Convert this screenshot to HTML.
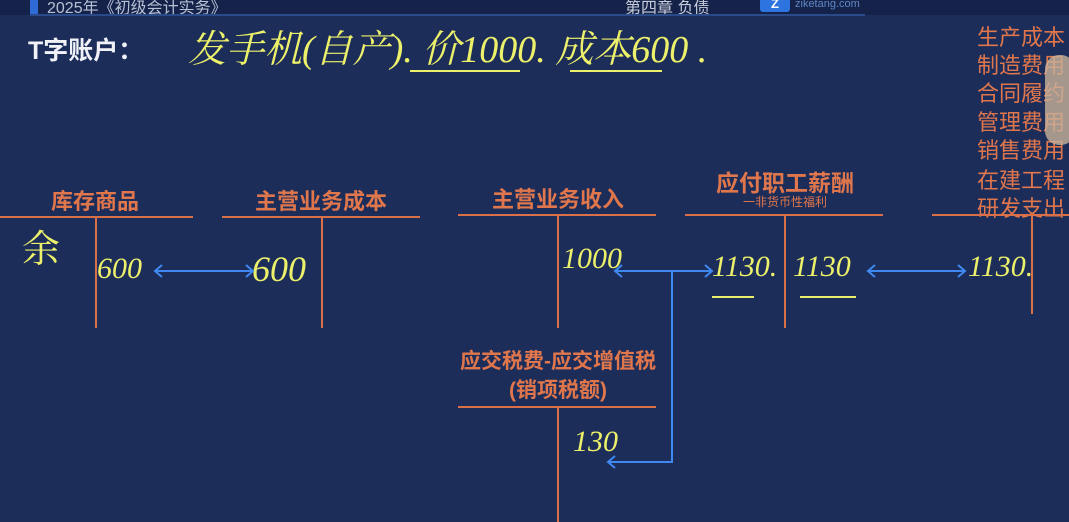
<!DOCTYPE html>
<html><head><meta charset="utf-8"><style>
*{margin:0;padding:0;box-sizing:border-box}
body{width:1069px;height:522px;overflow:hidden;background:#1c2d5a;position:relative;font-family:"Liberation Sans","Noto Sans CJK SC",sans-serif}
.a{position:absolute;white-space:nowrap}
.t{color:#e0764c;font-size:22px;font-weight:bold;transform:translateX(-50%)}
.h{position:absolute;background:#d9704a;height:2px}
.v{position:absolute;background:#d9704a;width:2px}
.y{color:#ecf06a;font-family:"Liberation Serif","Noto Serif CJK SC",serif;font-style:italic;font-size:30px}
.r{color:#e0764c;font-size:22px;left:977px}
</style></head><body>
<div class="a" style="left:0;top:0;width:1069px;height:15px;background:#15234a"></div>
<div class="a" style="left:30px;top:0;width:8px;height:14px;background:#2e6ad8"></div>
<div class="a" style="left:47px;top:-6px;color:#b8c0d4;font-size:16px">2025年《初级会计实务》</div>
<div class="a" style="left:625px;top:-6px;color:#c8ccd8;font-size:16px">第四章 负债</div>
<div class="a" style="left:760px;top:-4px;width:30px;height:16px;background:#2d74e0;border-radius:3px;color:#fff;font-size:13px;font-weight:bold;text-align:center">Z</div>
<div class="a" style="left:795px;top:-2px;color:#5f86c8;font-size:11px">ziketang.com</div>
<div class="a" style="left:30px;top:14px;width:835px;height:2px;background:#2a4a8a"></div>
<div class="a" style="left:28px;top:31px;color:#f0f2f8;font-size:25px;font-weight:bold">T字账户：</div>
<div class="a y" style="left:188px;top:18px;font-size:38px">发手机(自产). 价1000. 成本600 .</div>
<div class="a" style="left:410px;top:70px;width:110px;height:2px;background:#ecf06a"></div>
<div class="a" style="left:570px;top:70px;width:92px;height:2px;background:#ecf06a"></div>

<div class="a r" style="top:20px">生产成本</div>
<div class="a r" style="top:48px">制造费用</div>
<div class="a r" style="top:76px">合同履约</div>
<div class="a r" style="top:105px">管理费用</div>
<div class="a r" style="top:133px">销售费用</div>
<div class="a r" style="top:163px">在建工程</div>
<div class="a r" style="top:191px">研发支出</div>
<div class="a" style="left:1045px;top:55px;width:30px;height:90px;background:#c9b29a;border-radius:14px;opacity:.8"></div>

<div class="a t" style="left:95px;top:184px">库存商品</div>
<div class="h" style="left:0;top:216px;width:193px"></div><div class="v" style="left:95px;top:216px;height:112px"></div>
<div class="a t" style="left:321px;top:184px">主营业务成本</div>
<div class="h" style="left:222px;top:216px;width:198px"></div><div class="v" style="left:321px;top:216px;height:112px"></div>
<div class="a t" style="left:558px;top:182px">主营业务收入</div>
<div class="h" style="left:458px;top:214px;width:198px"></div><div class="v" style="left:557px;top:214px;height:114px"></div>
<div class="a t" style="left:785px;top:164px;font-size:23px">应付职工薪酬</div>
<div class="a t" style="left:785px;top:193px;font-size:12px;font-weight:normal">一非货币性福利</div>
<div class="h" style="left:685px;top:214px;width:198px"></div><div class="v" style="left:784px;top:214px;height:114px"></div>
<div class="h" style="left:932px;top:214px;width:137px"></div><div class="v" style="left:1031px;top:214px;height:100px"></div>
<div class="a t" style="left:558px;top:345px;font-size:21px">应交税费-应交增值税</div>
<div class="a t" style="left:558px;top:374px;font-size:21px">(销项税额)</div>
<div class="h" style="left:458px;top:406px;width:198px"></div><div class="v" style="left:557px;top:406px;height:116px"></div>

<div class="a y" style="left:22px;top:218px;font-size:38px;font-style:normal">余</div>
<div class="a y" style="left:97px;top:252px">600</div>
<div class="a y" style="left:252px;top:248px;font-size:36px">600</div>
<div class="a y" style="left:562px;top:242px">1000</div>
<div class="a y" style="left:712px;top:250px">1130.</div>
<div class="a y" style="left:793px;top:250px">1130</div>
<div class="a y" style="left:968px;top:250px">1130.</div>
<div class="a y" style="left:573px;top:425px">130</div>
<div class="a" style="left:712px;top:296px;width:42px;height:2px;background:#ecf06a"></div>
<div class="a" style="left:800px;top:296px;width:56px;height:2px;background:#ecf06a"></div>

<svg class="a" style="left:0;top:0" width="1069" height="522">
<g stroke="#3f88f0" stroke-width="2" fill="none">
<path d="M155 271H253M162 265L155 271L162 277M246 265L253 271L246 277"/>
<path d="M615 271H712M622 265L615 271L622 277M705 265L712 271L705 277"/>
<path d="M672 271V462H608M615 456L608 462L615 468"/>
<path d="M868 271H965M875 265L868 271L875 277M958 265L965 271L958 277"/>
</g></svg>
</body></html>
